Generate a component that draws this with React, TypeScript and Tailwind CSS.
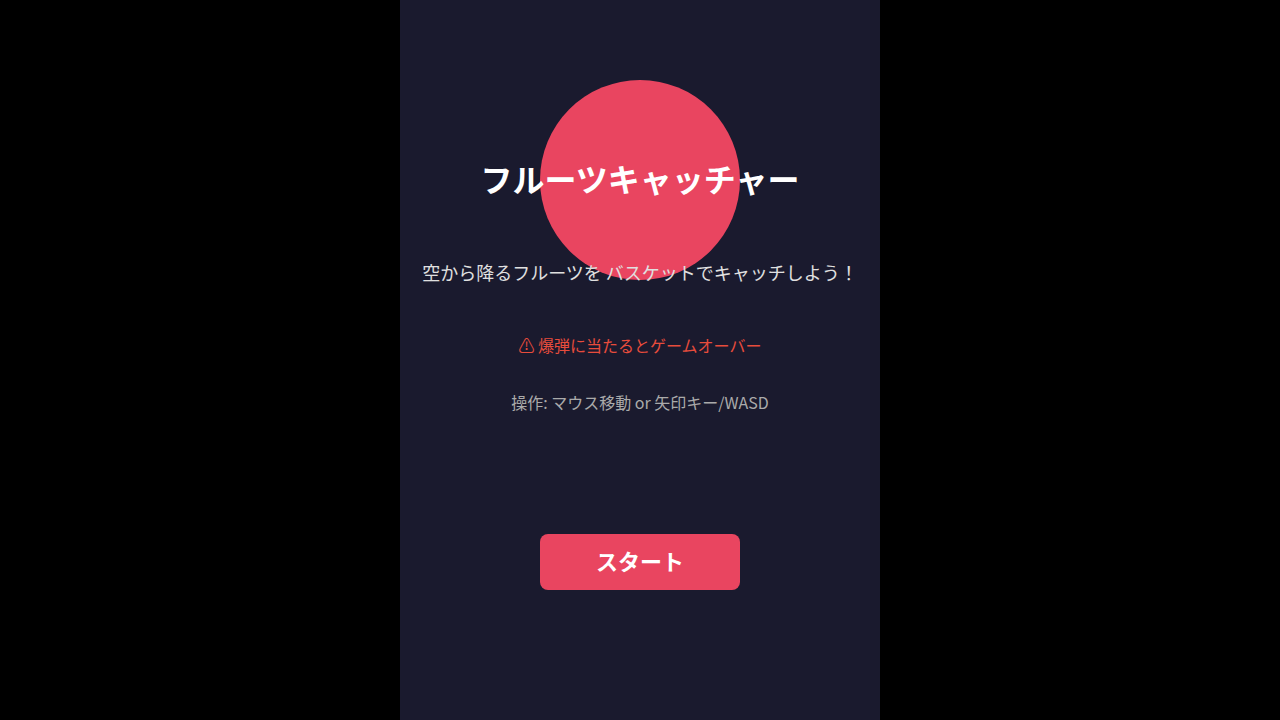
import { useState } from "react";

const TITLE = "フルーツキャッチャー";

export default function App() {
  const [started, setStarted] = useState(false);

  return (
    <div
      lang="ja"
      className="flex min-h-screen justify-center bg-black font-['Noto_Sans_CJK_JP',sans-serif]"
    >
      <main className="flex w-full max-w-[480px] flex-col items-center bg-[#1a1a2e] pt-20 text-center">
        {/* Title over the big fruit */}
        <div className="flex size-50 items-center justify-center rounded-full bg-[#e94560] pb-1">
          <h1 className="text-[32px] leading-10 font-bold whitespace-nowrap text-white">
            {TITLE}
          </h1>
        </div>

        <p className="-mt-5 text-lg leading-6 text-[#e0e0e0]">
          空から降るフルーツを バスケットでキャッチしよう！
        </p>

        <p className="mt-[49px] text-base leading-6 text-[#e74c3c]">
          ⚠ 爆弾に当たるとゲームオーバー
        </p>
        <p className="mt-[33px] text-base leading-6 text-[#aaaaaa]">
          操作: マウス移動 or 矢印キー/WASD
        </p>

        <button
          type="button"
          onClick={() => setStarted(true)}
          disabled={started}
          className="mt-30 h-14 w-50 rounded-lg bg-[#e94560] pb-1 text-[22px] leading-7 font-bold text-white hover:bg-[#ff5a75] focus:outline-none"
        >
          スタート
        </button>
      </main>
    </div>
  );
}
